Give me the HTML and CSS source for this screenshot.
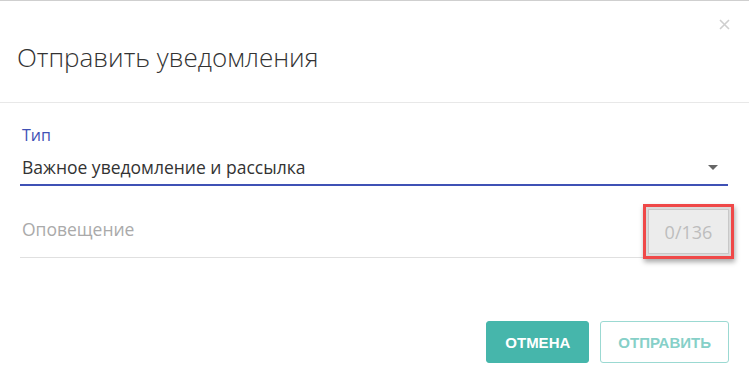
FILE: index.html
```html
<!doctype html>
<html>
  <head>
    <meta http-equiv="content-type" content="text/html; charset=UTF-8">
    <meta name="viewport" content="width=device-width, initial-scale=1">
    <title>Отправить уведомления</title>
    <link rel="stylesheet" href="styles.css">
  </head>

  <body>
    <div class="modal">
      <div class="modalHeader">
        <h4 class="title">Отправить уведомления</h4>
        <div class="close" title="Закрыть">
          <svg width="11" height="11" viewBox="0 0 11 11">
            <path d="M1 1 L10 10 M10 1 L1 10" stroke="#cfcfcf" stroke-width="1.6" fill="none"/>
          </svg>
        </div>
      </div>

      <div class="modalBody">
        <div class="field">
          <label class="label">Тип</label>
          <div class="select">
            <span>Важное уведомление и рассылка</span>
            <div class="arrow"></div>
          </div>
        </div>

        <div class="field note">
          <span class="placeholder">Оповещение</span>
          <div class="counter">
            <div class="counterInner">0/136</div>
          </div>
        </div>
      </div>

      <div class="modalFooter">
        <button class="btn btnFilled">ОТМЕНА</button>
        <button class="btn btnOutline">ОТПРАВИТЬ</button>
      </div>
    </div>
  </body>
</html>
```

FILE: styles.css
```css
body {
  margin: 0;
  background-color: white;
  font-family: "Open Sans", "Noto Sans", sans-serif;
  color: #333;
}

.modal {
  border-top: 1px solid #cfcfcf;
  height: 377px;
}

.modalHeader {
  position: relative;
  padding: 40px 18px 29px 17px;
  border-bottom: 1px solid #e8e8e8;
}

.title {
  margin: 0;
  font-size: 26px;
  line-height: 32px;
  font-weight: 300;
  color: #333;
}

.close {
  position: absolute;
  top: 18px;
  right: 19px;
  width: 11px;
  height: 11px;
  cursor: pointer;
}

.close > svg {
  display: block;
}

.modalBody {
  padding: 22px 21px 0 20px;
}

.label {
  display: block;
  padding-left: 2px;
  font-size: 16px;
  line-height: 20px;
  color: #3f51b5;
}

.select {
  display: flex;
  justify-content: space-between;
  align-items: center;
  padding: 10px 10px 5px 2px;
  font-size: 17.5px;
  line-height: 24px;
  color: #333;
  border-bottom: 2px solid #3f51b5;
}

.arrow {
  width: 0;
  height: 0;
  border-left: 5px solid transparent;
  border-right: 5px solid transparent;
  border-top: 5px solid #666;
}

.note {
  position: relative;
  margin-top: 31px;
  padding: 0 0 16px 2px;
  border-bottom: 1px solid #e0e0e0;
  font-size: 17.5px;
  line-height: 24px;
}

.placeholder {
  color: #aaa;
}

.counter {
  position: absolute;
  right: -6px;
  bottom: -2px;
  width: 91px;
  height: 55px;
  box-sizing: border-box;
  padding: 2px;
  border: 3px solid #ef4848;
  background-color: #dadada;
  box-shadow: 1px 3px 5px rgba(0, 0, 0, 0.35);
}

.counterInner {
  height: 100%;
  box-sizing: border-box;
  display: flex;
  justify-content: center;
  align-items: center;
  border: 1px solid #c8c8c8;
  background-color: #ececec;
  color: #bdbdbd;
  font-size: 18px;
}

.modalFooter {
  display: flex;
  justify-content: flex-end;
  gap: 11px;
  margin-top: 63px;
  padding-right: 20px;
}

.btn {
  height: 42px;
  padding: 0 18px;
  border-radius: 3px;
  font-family: "Liberation Sans", Arial, sans-serif;
  font-size: 15px;
  font-weight: bold;
  cursor: pointer;
}

.btnFilled {
  background-color: #46b6ab;
  border: 1px solid #46b6ab;
  color: white;
}

.btnOutline {
  padding: 0 17px;
  background-color: white;
  border: 1px solid #9bd9d2;
  color: #86d0c8;
}
```
